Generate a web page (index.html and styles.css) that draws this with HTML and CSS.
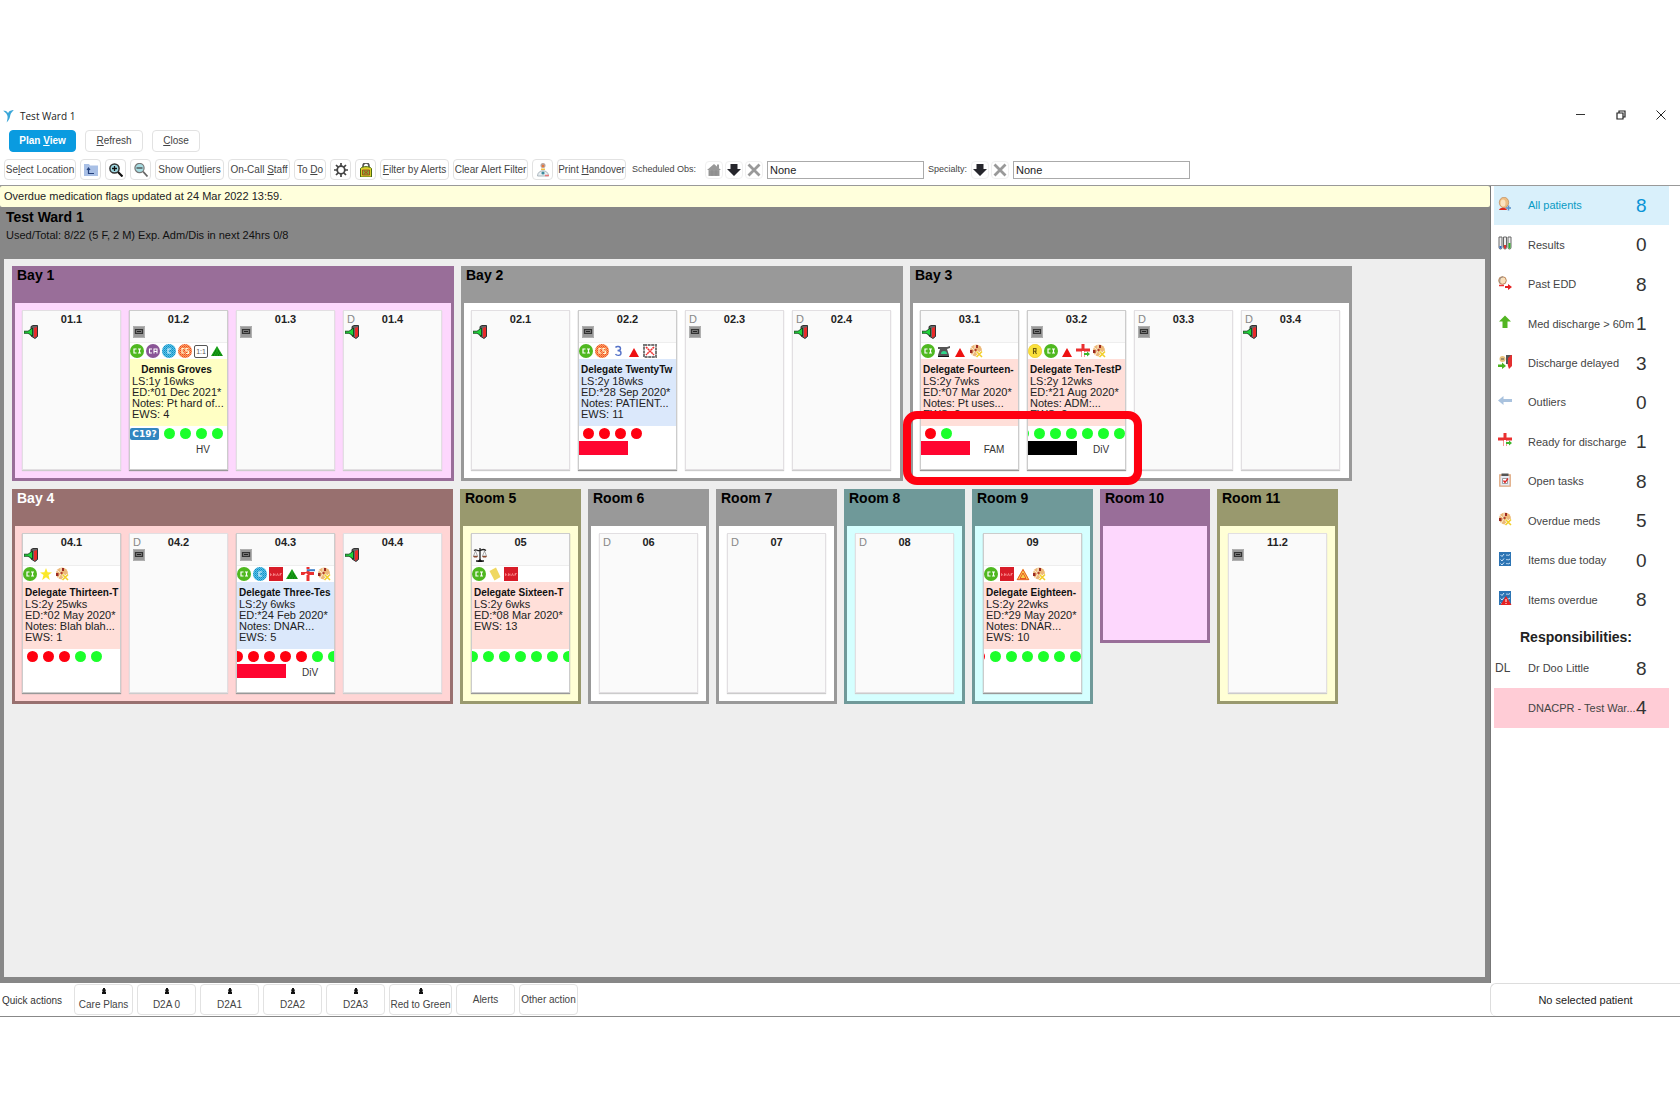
FILE: index.html
```html
<!DOCTYPE html>
<html lang="en">
<head>
<meta charset="utf-8">
<title>Test Ward 1</title>
<link rel="stylesheet" href="styles.css">
</head>
<body>
<svg class="sprite" aria-hidden="true">
  <defs>
    <pattern id="p-cyan" width="2" height="2" patternUnits="userSpaceOnUse"><rect width="2" height="2" fill="#55c4e8"/><rect width="1" height="1" fill="#1489c0"/><rect x="1" y="1" width="1" height="1" fill="#2a9fd2"/></pattern>
    <pattern id="p-orange" width="2" height="2" patternUnits="userSpaceOnUse"><rect width="2" height="2" fill="#ffa35c"/><rect width="1" height="1" fill="#e8452a"/><rect x="1" y="1" width="1" height="1" fill="#f06a3c"/></pattern>
  </defs>
  <symbol id="door" viewBox="0 0 14 14"><path d="M7 1.500L9 .5h4.500v11L11 13.500 7 11z" fill="#666" stroke="#111" stroke-width=".8"/><path d="M10 3l3-1v9l-3 2z" fill="#ea2a2a"/><path d="M0 6.200h4L8.500 3v8L4 8.300H0z" fill="#1fd53a" stroke="#0a3a12" stroke-width=".8"/></symbol>
  <symbol id="cabinet" viewBox="0 0 12 12"><path d="M0 0h12v12H0z" fill="#999"/><path d="M.5 .5h11v11H.500z" fill="none" stroke="#b0b0b0"/><path d="M2.500 3.500h7v4h-7z" fill="#777" stroke="#333" stroke-width="1.200"/><path d="M4 5.500h4" stroke="#222"/></symbol>
  <symbol id="scales" viewBox="0 0 14 14"><path d="M7 0v12M1 2.500c3-2 3 1 6 0s3-2 6 0M3 13h8" fill="none" stroke="#222" stroke-width="1.300"/><path d="M4 14l3-3 3 3z" fill="#111"/><path d="M2.500 3L.5 8h4zM11.500 3l-2 5h4z" fill="none" stroke="#777" stroke-width=".6"/><path d="M0 8h5L4 9.500H1zM9 8h5l-1 1.500h-3z" fill="#8a4a30"/></symbol>
  <symbol id="ci" viewBox="0 0 14 14"><circle cx="7" cy="7" r="7" fill="#4fb820"/><path d="M6.500 5H4v4h2.500M8 5h3M9.500 5v4M8 9h3" fill="none" stroke="#fff" stroke-width="1.200"/></symbol>
  <symbol id="ca" viewBox="0 0 14 14"><circle cx="7" cy="7" r="7" fill="#8a5596"/><path d="M6 5H3.500v4H6M8 9.500V5h3v4.500M8 7.500h3" fill="none" stroke="#fff" stroke-width="1.100"/></symbol>
  <symbol id="cy" viewBox="0 0 14 14"><circle cx="7" cy="7" r="7" fill="url(#p-cyan)"/><path d="M9 5H6v4h3" fill="none" stroke="#d8f4ff" stroke-width="1.200"/></symbol>
  <symbol id="or" viewBox="0 0 14 14"><circle cx="7" cy="7" r="7" fill="url(#p-orange)"/><path d="M6.500 4.500H4V9h2.500M10.500 4.500H8V7h2.500v2.500H8" fill="none" stroke="#fff3d0" stroke-width="1.200"/></symbol>
  <symbol id="r" viewBox="0 0 14 14"><circle cx="7" cy="7" r="6.700" fill="#fbe13c" stroke="#e6c21c" stroke-width=".6"/><path d="M5.500 10V4.500H8v2.700H5.500M7 7.200L8.500 10" fill="none" stroke="#6a5a10" stroke-width="1.100"/></symbol>
  <symbol id="tri-g" viewBox="0 0 14 14"><path d="M7 2l6 10H1z" fill="#18a018"/><path d="M5 7h1M8 7h1M4 9h1M6.500 9h1M9 9h1M3 11h1M5.500 11h1M8 11h1M10.500 11h1" stroke="#075a07"/></symbol>
  <symbol id="tri-r" viewBox="0 0 14 14"><path d="M7 4l5 9H2z" fill="#ee1111"/></symbol>
  <symbol id="tri-y" viewBox="0 0 14 14"><path d="M7 1.500L13.500 13H.5z" fill="#fbd04c"/><path d="M7 2.500L1.300 12.700h11.400z" fill="none" stroke="#e0391e" stroke-width=".8"/><path d="M7 6L4 11.500h6z" fill="none" stroke="#e0391e" stroke-width=".8"/></symbol>
  <symbol id="three" viewBox="0 0 14 14"><path d="M4.500 3.500c1-1.500 5-1.500 5 1 0 2-2 2-3 2 1.500 0 3.500.2 3.500 2.500 0 3-4.500 3-5.500 1" fill="none" stroke="#5572c8" stroke-width="1.400"/></symbol>
  <symbol id="crossbox" viewBox="0 0 14 14"><path d="M1 1h12v12H1z" fill="#fff" stroke="#777" stroke-width="2" stroke-dasharray="3 .6"/><path d="M3 3l8 8M11 3l-8 8" stroke="#e33" stroke-width="1.600" stroke-dasharray="2 .5"/></symbol>
  <symbol id="phone" viewBox="0 0 14 14"><path d="M1 3h9l3-1v2l-3 1H1z" fill="#555"/><path d="M3 5h7l2 6v2H1v-2z" fill="#555"/><path d="M4 10a3 3 0 0 1 6 0z" fill="#2fd68a"/><path d="M1 12.500h11" stroke="#111"/></symbol>
  <symbol id="meds" viewBox="0 0 14 14"><circle cx="7" cy="6.500" r="6" fill="#edb877"/><path d="M7 1h2v3H7zM1 6h2.500v3H1z" fill="#9b2a22"/><path d="M6 .5v6L1.500 3M6 6.500L3 11.500" stroke="#fff" stroke-width=".7" fill="none"/><circle cx="6.500" cy="6" r="1.200" fill="#b4442c"/><path d="M7.500 7.500l5.500 5.500M13 7.500L7.500 13" stroke="#fff" stroke-width="2.600"/><path d="M7.500 7.500l5.500 5.500M13 7.500L7.500 13" stroke="#f2cf2a" stroke-width="1.600"/></symbol>
  <symbol id="plus" viewBox="0 0 14 14"><path d="M5.500 0h3v4.500H14v3H8.500V13h-3V7.500H0v-3h5.500z" fill="#ea3030"/><path d="M6 7h2v1.500h6v2H8V13H6z" fill="#fff"/><path d="M8 9h3V7.500l3 2.500-3 2.500V11H8z" fill="#3cb62c"/></symbol>
  <symbol id="plusb" viewBox="0 0 14 14"><path d="M5.500 0h3v5H13v3H8.500v6h-3V8H0V5h5.500z" fill="#ea3030"/><path d="M5.500 2H14v2H5.500z" fill="#fff"/><path d="M6 2.200h8v2H6z" fill="#3c7fc8"/><path d="M3 8l2-2 2 2z" fill="#fff"/></symbol>
  <symbol id="star" viewBox="0 0 14 14"><path d="M7 1l1.600 4.200 4.400.2-3.500 2.700L10.800 13 7 10.300 3.200 13l1.300-4.900L1 5.400l4.400-.2z" fill="#fbe82a"/></symbol>
  <symbol id="note" viewBox="0 0 14 14"><path d="M1.500 4L8 .5 12.500 10 6.500 13.500z" fill="#f0d860"/></symbol>
  <symbol id="dnar" viewBox="0 0 14 14"><path d="M0 0h14v14H0z" fill="#d81c28"/><path d="M1.500 9V6.500l1.500 2M4.500 9V6.500L6 8.500V6.500M7.500 9l1-2.500 1 2.500M11 9V6.500h1.500L11 8" stroke="#ff9c9c" stroke-width=".7" fill="none"/></symbol>
  <symbol id="people" viewBox="0 0 14 14"><ellipse cx="6" cy="5.500" rx="4.700" ry="5.300" fill="#eebd82" stroke="#b97c48" stroke-width=".6"/><ellipse cx="5" cy="6" rx="2.500" ry="3.500" fill="#fbe3c0"/><path d="M1 13c1-3 7-3 8 0z" fill="#dd2a20"/><path d="M8 11h5M10.500 8.500v5" stroke="#5b8fc8" stroke-width="1.600"/></symbol>
  <symbol id="tubes" viewBox="0 0 14 14"><path d="M1 1h3v10.500a1.500 1.500 0 0 1-3 0zM5.500 1h3v10.500a1.500 1.500 0 0 1-3 0zM10 1h3v10.500a1.500 1.500 0 0 1-3 0z" fill="#eee" stroke="#666"/><path d="M1.500 10h2v2.500h-2z" fill="#2e6bd0"/><path d="M6 9h2v3.500H6z" fill="#e03030"/><path d="M10.500 7h2v5.500h-2z" fill="#38b030"/></symbol>
  <symbol id="past" viewBox="0 0 14 14"><circle cx="4.500" cy="4.500" r="3.800" fill="#f9e0bc" stroke="#bb8458"/><path d="M2 7c-1-4 1-6 3-6" stroke="#888" fill="none"/><path d="M1 9.500h5" stroke="#e33" stroke-width="1.500"/><path d="M7 10h3V8l4 3-4 3v-2H7z" fill="#e52222"/></symbol>
  <symbol id="up" viewBox="0 0 14 14"><path d="M7 .5l6 6h-3.500V13h-5V6.500H1z" fill="#52b522"/></symbol>
  <symbol id="delayed" viewBox="0 0 14 14"><path d="M8 0h6v11l-3 3-1-3z" fill="#e33030"/><path d="M8 0h5L10 3v6H8z" fill="#555"/><circle cx="4.500" cy="4" r="3" fill="#e7c27c"/><path d="M3 4h3" stroke="#555"/><path d="M0 9.500h4V7.500L8 11l-4 3v-2H0z" fill="#4bb31e"/></symbol>
  <symbol id="left" viewBox="0 0 14 14"><path d="M0 6.500L5.500 2v3H14v3H5.500v3z" fill="#a9c2de"/></symbol>
  <symbol id="tasks" viewBox="0 0 14 14"><path d="M1.800 2h10.400v11.200H1.800z" fill="#e6eaf4" stroke="#dfa67c" stroke-width="1.300"/><path d="M3.500 .5h7V3h-7z" fill="#555"/><path d="M4.500 5.500h5v5h-5z" fill="#fff" stroke="#888" stroke-width=".8"/><path d="M5.500 7.500L7 9.500l3-4" stroke="#d22" fill="none" stroke-width="1.300"/></symbol>
  <symbol id="items" viewBox="0 0 14 14"><path d="M1 0h12v14H1z" fill="#2c74b4"/><path d="M2.500 3l1.500 1.500 2-2.500M2.500 7.500L4 9l2-2.500M2.500 11.500L4 13l2-2.500M8 3.500c1-1.500 2 1 4-1M8 8c1-1.500 2 1 4-1M8 12c1-1.500 2 1 4-1" fill="none" stroke="#cfe6fa"/></symbol>
  <symbol id="folder" viewBox="0 0 14 14"><path d="M0 1h5l1 1.500h8V13H0z" fill="#a9c0e6"/><path d="M3 7l1.500-2L6 7M4.500 6v4.500H10" fill="none" stroke="#23407c" stroke-width="1.200"/></symbol>
  <symbol id="zin" viewBox="0 0 14 14"><circle cx="5.500" cy="5.500" r="4.600" fill="#9fd8e2" stroke="#333" stroke-width="1.500"/><path d="M3 5.500h5M5.500 3v5" stroke="#111" stroke-width="1.300"/><path d="M9 9l4.500 4.500" stroke="#111" stroke-width="2.200"/></symbol>
  <symbol id="zout" viewBox="0 0 14 14"><circle cx="5.500" cy="5" r="4.600" fill="#a6dce2" stroke="#777" stroke-width="1.200"/><path d="M2.500 5h6" stroke="#444" stroke-width="1.300"/><path d="M9 8.500l4.500 5" stroke="#666" stroke-width="1.800"/></symbol>
  <symbol id="gear" viewBox="0 0 14 14"><circle cx="7" cy="7" r="3.800" fill="none" stroke="#444" stroke-width="1.800"/><path d="M7 0v3M7 11v3M0 7h3M11 7h3M2 2l2.200 2.200M9.800 9.800L12 12M12 2L9.800 4.200M4.200 9.800L2 12" stroke="#444" stroke-width="1.700"/></symbol>
  <symbol id="lock" viewBox="0 0 14 14"><path d="M4 5V3a3 3 0 0 1 6 0v2" fill="none" stroke="#555" stroke-width="1.600"/><path d="M1.500 5.500C3 3 11 3 12.500 5.500V14h-11z" fill="#d8d02c" stroke="#4b6a14"/><path d="M3.500 7h7v5h-7z" fill="#7fae34" stroke="#a33a1a" stroke-width=".8"/><path d="M5 8l4 3M9 8l-4 3" stroke="#c8301c" stroke-width=".8"/></symbol>
  <symbol id="nurse" viewBox="0 0 14 14"><circle cx="7" cy="2.500" r="2.500" fill="#b9a39c"/><circle cx="7" cy="3" r="1.200" fill="#e8743a"/><path d="M5 5.500h4V7H5z" fill="#f1c04a"/><path d="M1.500 13c0-7 11-7 11 0z" fill="#e8eef2" stroke="#9aa7b0" stroke-width=".8"/><circle cx="7" cy="10" r="1.600" fill="#3c8a9c"/><path d="M9 12.500h4" stroke="#e87878" stroke-width="1.500"/></symbol>
  <symbol id="home" viewBox="0 0 14 14"><path d="M7 1l7 6h-1.500v6h-11V7H0z" fill="#999"/><path d="M10 1.500h2V5h-2z" fill="#999"/><path d="M2 9h10M2 11h10M5 7v6M9 7v6" stroke="#888" stroke-width=".6"/></symbol>
  <symbol id="down" viewBox="0 0 14 14"><path d="M3.500 1h7v5H14l-7 7-7-7h3.500z" fill="#26262c"/></symbol>
  <symbol id="cross" viewBox="0 0 14 14"><path d="M1.500 1.500l11 11M12.500 1.500l-11 11" stroke="#999" stroke-width="2.800"/></symbol>
  <symbol id="pawn" viewBox="0 0 6 6"><path d="M2 0h2v1.500h1v1H4.500V4H5v2H1V4h.5V2.500H1v-1h1z" fill="#111"/></symbol>
</svg>

<header class="titlebar">
  <svg class="logo" viewBox="0 0 12 14"><path d="M0 1c2 .5 4 0 5.500 3C7 1 9 1 12 .5 10.500 2 8.500 3.500 8 6 7.500 9 7 11 4 14 5 10 5.500 8 4.500 6 3.500 3.500 1.500 2.500 0 1z" fill="#3aa6d8"/></svg>
  <h1>Test Ward 1</h1>
  <div class="winctl">
    <button aria-label="Minimise"><svg viewBox="0 0 10 10"><path d="M0 4.500h9" stroke="#333"/></svg></button>
    <button aria-label="Restore"><svg viewBox="0 0 10 10"><path d="M1 3h6v6H1zM3 3V1h6v6H7" fill="none" stroke="#222" stroke-width="1.200"/></svg></button>
    <button aria-label="Close window"><svg viewBox="0 0 10 10"><path d="M.5 .5l9 9M9.500 .5l-9 9" stroke="#222"/></svg></button>
  </div>
</header>

<div class="actions">
  <button class="btn primary">Plan <u>V</u>iew</button>
  <button class="btn refresh"><u>R</u>efresh</button>
  <button class="btn close"><u>C</u>lose</button>
</div>

<div class="toolbar">
  <button class="btn w72">Se<u>l</u>ect Location</button>
  <button class="btn sq" aria-label="Up one level"><svg><use href="#folder"/></svg></button>
  <button class="btn sq" aria-label="Zoom in"><svg><use href="#zin"/></svg></button>
  <button class="btn sq" aria-label="Zoom out"><svg><use href="#zout"/></svg></button>
  <button class="btn w69">Show Out<u>l</u>iers</button>
  <button class="btn w62">On-Call <u>S</u>taff</button>
  <button class="btn w32">To <u>D</u>o</button>
  <button class="btn sq" aria-label="Settings"><svg><use href="#gear"/></svg></button>
  <button class="btn sq" aria-label="Lock"><svg><use href="#lock"/></svg></button>
  <button class="btn w69"><u>F</u>ilter by Alerts</button>
  <button class="btn w75">Clear Alert Filter</button>
  <button class="btn sq" aria-label="Staff"><svg><use href="#nurse"/></svg></button>
  <button class="btn w69">Print <u>H</u>andover</button>
  <label class="lbl-obs" for="obs">Scheduled Obs:</label>
  <span class="minis">
    <button class="mini" aria-label="Home"><svg><use href="#home"/></svg></button>
    <button class="mini" aria-label="Choose observations"><svg><use href="#down"/></svg></button>
    <button class="mini" aria-label="Clear observations"><svg><use href="#cross"/></svg></button>
  </span>
  <input class="obs" id="obs" value="None">
  <label for="spec">Specialty:</label>
  <span class="minis">
    <button class="mini" aria-label="Choose specialty"><svg><use href="#down"/></svg></button>
    <button class="mini" aria-label="Clear specialty"><svg><use href="#cross"/></svg></button>
  </span>
  <input class="spec" id="spec" value="None">
</div>

<div class="content">
  <main class="ward">
    <p class="notice">Overdue medication flags updated at 24 Mar 2022 13:59.</p>
    <div class="ward-head">
      <h2>Test Ward 1</h2>
      <p>Used/Total: 8/22 (5 F, 2 M) Exp. Adm/Dis in next 24hrs 0/8</p>
    </div>
    <div class="plan">
      <section class="bay purple"><h3>Bay 1</h3><div class="beds">
        <article class="bed"><div class="top"><b>01.1</b><svg class="st"><use href="#door"/></svg></div></article>
        <article class="bed used"><div class="top"><b>01.2</b><svg class="st cab"><use href="#cabinet"/></svg></div>
          <div class="flags"><svg><use href="#ci"/></svg><svg><use href="#ca"/></svg><svg><use href="#cy"/></svg><svg><use href="#or"/></svg><span class="one">1:1</span><svg><use href="#tri-g"/></svg></div>
          <div class="info yellow"><b class="mid">Dennis Groves</b><span>LS:1y 16wks</span><span>ED:*01 Dec 2021*</span><span>Notes: Pt hard of...</span><span>EWS: 4</span></div>
          <div class="dots badge"><em>C19?</em><i></i><i></i><i></i><i></i></div>
          <div class="foot"><span></span><span>HV</span></div></article>
        <article class="bed"><div class="top"><b>01.3</b><svg class="st cab"><use href="#cabinet"/></svg></div></article>
        <article class="bed"><div class="top"><small>D</small><b>01.4</b><svg class="st"><use href="#door"/></svg></div></article>
      </div></section>

      <section class="bay grey"><h3>Bay 2</h3><div class="beds">
        <article class="bed"><div class="top"><b>02.1</b><svg class="st"><use href="#door"/></svg></div></article>
        <article class="bed used"><div class="top"><b>02.2</b><svg class="st cab"><use href="#cabinet"/></svg></div>
          <div class="flags"><svg><use href="#ci"/></svg><svg><use href="#or"/></svg><svg><use href="#three"/></svg><svg><use href="#tri-r"/></svg><svg><use href="#crossbox"/></svg></div>
          <div class="info blue"><b>Delegate TwentyTw</b><span>LS:2y 18wks</span><span>ED:*28 Sep 2020*</span><span>Notes: PATIENT...</span><span>EWS: 11</span></div>
          <div class="dots"><i class="red"></i><i class="red"></i><i class="red"></i><i class="red"></i></div>
          <div class="foot"><span class="bar"></span></div></article>
        <article class="bed"><div class="top"><small>D</small><b>02.3</b><svg class="st cab"><use href="#cabinet"/></svg></div></article>
        <article class="bed"><div class="top"><small>D</small><b>02.4</b><svg class="st"><use href="#door"/></svg></div></article>
      </div></section>

      <section class="bay grey"><h3>Bay 3</h3><div class="beds">
        <article class="bed used"><div class="top"><b>03.1</b><svg class="st"><use href="#door"/></svg></div>
          <div class="flags"><svg><use href="#ci"/></svg><svg><use href="#phone"/></svg><svg><use href="#tri-r"/></svg><svg><use href="#meds"/></svg></div>
          <div class="info peach"><b>Delegate Fourteen-</b><span>LS:2y 7wks</span><span>ED:*07 Mar 2020*</span><span>Notes: Pt uses...</span><span>EWS: 2</span></div>
          <div class="dots"><i class="red"></i><i></i></div>
          <div class="foot"><span class="bar"></span><span>FAM</span></div></article>
        <article class="bed used"><div class="top"><b>03.2</b><svg class="st cab"><use href="#cabinet"/></svg></div>
          <div class="flags"><svg><use href="#r"/></svg><svg><use href="#ci"/></svg><svg><use href="#tri-r"/></svg><svg><use href="#plus"/></svg><svg><use href="#meds"/></svg></div>
          <div class="info peach"><b>Delegate Ten-TestP</b><span>LS:2y 12wks</span><span>ED:*21 Aug 2020*</span><span>Notes: ADM:...</span><span>EWS: 2</span></div>
          <div class="dots end"><i></i><i></i><i></i><i></i><i></i><i></i><i></i></div>
          <div class="foot"><span class="bar black"></span><span>DiV</span></div></article>
        <article class="bed"><div class="top"><small>D</small><b>03.3</b><svg class="st cab"><use href="#cabinet"/></svg></div></article>
        <article class="bed"><div class="top"><small>D</small><b>03.4</b><svg class="st"><use href="#door"/></svg></div></article>
      </div><div class="marker"></div></section>

      <section class="bay rose"><h3>Bay 4</h3><div class="beds">
        <article class="bed used"><div class="top"><b>04.1</b><svg class="st"><use href="#door"/></svg></div>
          <div class="flags"><svg><use href="#ci"/></svg><svg><use href="#star"/></svg><svg><use href="#meds"/></svg></div>
          <div class="info peach"><b>Delegate Thirteen-T</b><span>LS:2y 25wks</span><span>ED:*02 May 2020*</span><span>Notes: Blah blah...</span><span>EWS: 1</span></div>
          <div class="dots"><i class="red"></i><i class="red"></i><i class="red"></i><i></i><i></i></div></article>
        <article class="bed"><div class="top"><small>D</small><b>04.2</b><svg class="st cab"><use href="#cabinet"/></svg></div></article>
        <article class="bed used"><div class="top"><b>04.3</b><svg class="st cab"><use href="#cabinet"/></svg></div>
          <div class="flags"><svg><use href="#ci"/></svg><svg><use href="#cy"/></svg><svg><use href="#dnar"/></svg><svg><use href="#tri-g"/></svg><svg><use href="#plusb"/></svg><svg><use href="#meds"/></svg></div>
          <div class="info blue"><b>Delegate Three-Tes</b><span>LS:2y 6wks</span><span>ED:*24 Feb 2020*</span><span>Notes: DNAR...</span><span>EWS: 5</span></div>
          <div class="dots end over"><i class="red"></i><i class="red"></i><i class="red"></i><i class="red"></i><i class="red"></i><i></i><i></i></div>
          <div class="foot"><span class="bar"></span><span>DiV</span></div></article>
        <article class="bed"><div class="top"><b>04.4</b><svg class="st"><use href="#door"/></svg></div></article>
      </div></section>

      <section class="bay room olive"><h3>Room 5</h3><div class="beds">
        <article class="bed used"><div class="top"><b>05</b><svg class="st"><use href="#scales"/></svg></div>
          <div class="flags"><svg><use href="#ci"/></svg><svg><use href="#note"/></svg><svg><use href="#dnar"/></svg></div>
          <div class="info peach"><b>Delegate Sixteen-T</b><span>LS:2y 6wks</span><span>ED:*08 Mar 2020*</span><span>EWS: 13</span></div>
          <div class="dots end over"><i></i><i></i><i></i><i></i><i></i><i></i><i></i></div></article>
      </div></section>
      <section class="bay room grey"><h3>Room 6</h3><div class="beds"><article class="bed"><div class="top"><small>D</small><b>06</b></div></article></div></section>
      <section class="bay room grey"><h3>Room 7</h3><div class="beds"><article class="bed"><div class="top"><small>D</small><b>07</b></div></article></div></section>
      <section class="bay room teal"><h3>Room 8</h3><div class="beds"><article class="bed"><div class="top"><small>D</small><b>08</b></div></article></div></section>
      <section class="bay room teal"><h3>Room 9</h3><div class="beds">
        <article class="bed used"><div class="top"><b>09</b></div>
          <div class="flags"><svg><use href="#ci"/></svg><svg><use href="#dnar"/></svg><svg><use href="#tri-y"/></svg><svg><use href="#meds"/></svg></div>
          <div class="info peach"><b>Delegate Eighteen-</b><span>LS:2y 22wks</span><span>ED:*29 May 2020*</span><span>Notes: DNAR...</span><span>EWS: 10</span></div>
          <div class="dots end"><i class="red"></i><i></i><i></i><i></i><i></i><i></i><i></i></div></article>
      </div></section>
      <section class="bay room purple empty"><h3>Room 10</h3><div class="beds"></div></section>
      <section class="bay room olive"><h3>Room 11</h3><div class="beds"><article class="bed"><div class="top"><b>11.2</b><svg class="st cab"><use href="#cabinet"/></svg></div></article></div></section>
    </div>
  </main>

  <aside class="side">
    <ul class="filters">
      <li class="on"><svg><use href="#people"/></svg><a href="#all">All patients</a><b>8</b></li>
      <li><svg><use href="#tubes"/></svg><a href="#results">Results</a><b>0</b></li>
      <li><svg><use href="#past"/></svg><a href="#edd">Past EDD</a><b>8</b></li>
      <li><svg><use href="#up"/></svg><a href="#med">Med discharge &gt; 60m</a><b>1</b></li>
      <li><svg><use href="#delayed"/></svg><a href="#delay">Discharge delayed</a><b>3</b></li>
      <li><svg><use href="#left"/></svg><a href="#out">Outliers</a><b>0</b></li>
      <li><svg><use href="#plus"/></svg><a href="#ready">Ready for discharge</a><b>1</b></li>
      <li><svg><use href="#tasks"/></svg><a href="#tasks-list">Open tasks</a><b>8</b></li>
      <li><svg><use href="#meds"/></svg><a href="#overdue-meds">Overdue meds</a><b>5</b></li>
      <li><svg><use href="#items"/></svg><a href="#due">Items due today</a><b>0</b></li>
      <li><svg viewBox="0 0 14 14"><use href="#items"/><path d="M8 5l5.500 9h-11z" fill="#e52222"/><path d="M8 8v3M8 12v1" stroke="#fff"/></svg><a href="#overdue">Items overdue</a><b>8</b></li>
    </ul>
    <h2>Responsibilities:</h2>
    <ul class="people">
      <li><span class="ini">DL</span><a href="#doo">Dr Doo Little</a><b>8</b></li>
      <li class="pink"><span></span><a href="#dnacpr">DNACPR - Test War...</a><b>4</b></li>
    </ul>
  </aside>
</div>

<footer class="bottom">
  <span class="qa">Quick actions</span>
  <div class="quick">
    <button class="btn q"><svg><use href="#pawn"/></svg>Care Plans</button>
    <button class="btn q"><svg><use href="#pawn"/></svg>D2A 0</button>
    <button class="btn q"><svg><use href="#pawn"/></svg>D2A1</button>
    <button class="btn q"><svg><use href="#pawn"/></svg>D2A2</button>
    <button class="btn q"><svg><use href="#pawn"/></svg>D2A3</button>
    <button class="btn q wide"><svg><use href="#pawn"/></svg>Red to Green</button>
    <button class="btn q">Alerts</button>
    <button class="btn q">Other action</button>
  </div>
  <p class="none">No selected patient</p>
</footer>
</body>
</html>
```

FILE: styles.css
```css
* { box-sizing: border-box; }
body {
  margin: 0;
  min-height: 100vh;
  padding: 103px 0;
  display: flex;
  flex-direction: column;
  background: #fff;
  color: #222;
  font: 11px/13px "Liberation Sans", Arial, sans-serif;
}
h1, h2, h3, p, ul { margin: 0; padding: 0; }
ul { list-style: none; }
a { color: inherit; text-decoration: none; }
svg { display: block; width: 14px; height: 14px; flex: none; }
.sprite { position: absolute; width: 0; height: 0; }

/* Window title */
.titlebar { display: flex; align-items: center; height: 25px; padding-left: 3px; gap: 6px; }
.titlebar h1 { font: 10px/14px "Open Sans", sans-serif; color: #222; flex: 1; }
.logo { width: 11px; }
.winctl { display: flex; gap: 10px; padding: 0 4px 2px 0; }
.winctl button { width: 30px; height: 20px; padding: 0; border: 0; background: none; display: flex; align-items: center; justify-content: center; }
.winctl svg { width: 10px; height: 10px; }

/* Buttons */
.btn {
  height: 21px;
  padding: 0;
  border: 1px solid #e2e2e2;
  border-radius: 4px;
  background: #fff;
  color: #444;
  font: 10px/12px "Liberation Sans", Arial, sans-serif;
  white-space: nowrap;
  text-align: center;
  flex: none;
}
.actions { display: flex; gap: 9px; padding: 2px 0 0 9px; height: 26px; }
.actions .btn { width: 58px; height: 22px; }
.actions .primary { width: 67px; background: #0a9be0; border-color: #0a9be0; color: #fff; font-weight: bold; }
.actions .close { width: 48px; }

.toolbar { display: flex; align-items: center; gap: 4px; height: 31px; padding: 0 4px; color: #444; }
.w72 { width: 72px; }
.w69 { width: 69px; }
.w62 { width: 62px; }
.w32 { width: 32px; }
.w75 { width: 75px; }
.sq { width: 21px; display: flex; align-items: center; justify-content: center; }
.minis { display: flex; gap: 2px; }
.mini { width: 18px; height: 18px; padding: 0; border: 1px solid #f0f0f0; border-radius: 4px; background: #fff; display: flex; align-items: center; justify-content: center; }
.toolbar label { font-size: 9px; white-space: nowrap; }
.toolbar .lbl-obs { width: 71px; padding-left: 2px; }
.toolbar input { height: 18px; padding: 0 2px; border: 1px solid #aaa; background: #fff; color: #222; font: 11px/13px "Liberation Sans", Arial, sans-serif; }
.obs { width: 157px; }
.spec { width: 177px; }

/* Main area */
.content { flex: 1; display: flex; border-top: 1px solid #999; }
.ward { flex: 1; min-width: 0; display: flex; flex-direction: column; background: #878787; }
.notice { height: 21px; padding: 4px; background: #ffffdc; color: #222; border-radius: 2px; }
.ward-head { height: 52px; padding: 3px 6px; color: #111; }
.ward-head h2 { font-size: 14px; line-height: 15px; color: #000; }
.ward-head p { line-height: 20px; }
.plan {
  flex: 1;
  margin: 0 5px 6px 4px;
  padding: 7px 8px;
  background: #eee;
  display: flex;
  flex-wrap: wrap;
  align-items: flex-start;
  align-content: flex-start;
  gap: 8px 7px;
}

/* Bays and rooms */
.bay { position: relative; border: solid var(--edge); border-width: 0 3px 3px; background: var(--fill); }
.bay h3 { height: 37px; padding: 1px 2px; background: var(--edge); color: #000; font-size: 14px; line-height: 16px; }
.beds { display: flex; gap: 10px; padding: 8px 10px 9px 8px; }
.rose .beds { padding-right: 9px; }
.room .beds { padding-left: 9px; padding-right: 9px; }
.purple { --edge: #996e99; --fill: #fdd7fd; }
.grey { --edge: #999; --fill: #fff; }
.rose { --edge: #98706f; --fill: #ffd5d5; }
.rose h3 { color: #fff; }
.olive { --edge: #99996e; --fill: #ffffd5; }
.teal { --edge: #6f9999; --fill: #d5ffff; }
.empty { width: 110px; }
.empty .beds { height: 114px; }

/* Beds */
.bed { width: 97px; height: 158px; background: #fafafa; box-shadow: 0 0 0 1px #e2dfe2, 0 1px 1px 1px #ccc; overflow: hidden; }
.used { background: #fff; box-shadow: 0 0 0 1px #ccc, 0 1px 1px 1px #999; }
.top { display: grid; grid-template: 12px 14px / 14px 1fr 14px; height: 31px; padding: 2px 0 0; background: #fafafa; line-height: 13px; }
.top b { grid-column: 2; grid-row: 1; text-align: center; }
.top small { grid-column: 1; grid-row: 1; font-size: 11px; color: #888; padding-left: 3px; }
.st { grid-row: 2; margin-left: 1px; }
.cab { width: 12px; height: 12px; margin: 1px 0 0 3px; }
.flags { height: 17px; display: flex; gap: 2px; align-items: center; border-top: 1px solid #eee; }
.one { width: 14px; height: 13px; border: 1px solid #555; border-radius: 2px; font-size: 7px; line-height: 11px; text-align: center; color: #555; flex: none; }
.info { height: 67px; padding: 4px 2px 0; white-space: nowrap; overflow: hidden; }
.info > * { display: block; line-height: 11px; }
.info b { font-size: 10px; line-height: 13px; color: #111; }
.info .mid { padding-right: 4px; text-align: center; }
.yellow { background: #ffffc4; }
.blue { background: #dbe8fb; }
.peach { background: #ffdfd9; }
.dots { height: 15px; padding-left: 4px; display: flex; gap: 5px; align-items: center; }
.dots i { width: 11px; height: 11px; border-radius: 50%; background: #1bff2b; flex: none; }
.dots .red { background: #ff0010; }
.badge { padding-left: 0; }
.badge em { width: 29px; height: 12px; border-radius: 2px; background: #3286c0; color: #fff; font: bold 9px/12px "DejaVu Sans", sans-serif; flex: none; text-align: center; }
.end { justify-content: flex-end; padding-left: 0; }
.over { margin-right: -5px; }
.foot { display: grid; grid-template-columns: 49px 1fr; height: 15px; font-size: 10px; line-height: 17px; text-align: center; color: #333; }
.bar { height: 14px; background: #ff0530; }
.black { background: #000; }
.marker { position: absolute; left: -10px; top: 145px; width: 239px; height: 74px; border: 8px solid #ff0010; border-radius: 14px; z-index: 1; }

/* Side list */
.side { width: 190px; flex: none; padding: 0 11px 0 3px; border-left: 1px solid #777; color: #444; }
.filters { height: 434px; display: grid; grid-auto-rows: 1fr; }
.side li { display: grid; grid-template-columns: 31px 106px 1fr; column-gap: 2px; align-items: center; padding-left: 1px; }
.side li b { font-size: 19px; line-height: 20px; font-weight: normal; color: #333; }
.side li a { white-space: nowrap; }
.side li svg { margin: 0 0 4px 3px; }
.side .on { background: #d9f0fb; color: #0a9bc4; }
.side .on b { color: #0a94d6; }
.side h2 { padding: 6px 0 1px 26px; font-size: 14px; line-height: 22px; color: #222; }
.people li { height: 39px; }
.people .ini { font-size: 12px; }
.people .pink { height: 40px; background: #ffccd6; }

/* Footer */
.bottom { display: flex; height: 34px; border-bottom: 1px solid #888; color: #333; }
.qa { width: 71px; padding: 11px 0 0 2px; font-size: 10px; }
.quick { flex: 1; display: flex; gap: 4px; padding: 1px 0 0 3px; }
.q { width: 59px; height: 31px; display: flex; flex-direction: column; align-items: center; justify-content: center; gap: 5px; }
.q svg { width: 6px; height: 6px; }
.q.wide { width: 63px; }
.none { width: 190px; border: 1px solid #ddd; border-width: 1px 0 0 1px; border-radius: 6px 0 0 6px; text-align: center; line-height: 33px; color: #222; }
```
